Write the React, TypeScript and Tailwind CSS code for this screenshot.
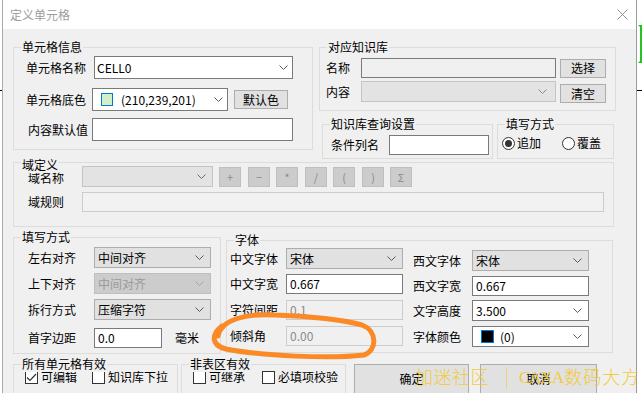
import React from "react";

function Chevron({ color = "#5a5a5a" }: { color?: string }) {
  return (
    <svg width="9" height="5" viewBox="0 0 9 5" className="shrink-0">
      <polyline points="0.5,0.5 4.5,4.5 8.5,0.5" fill="none" stroke={color} strokeWidth="1" />
    </svg>
  );
}

function Frame({ title, cls, titleCls = "top-[-9px]", children }: { title: string; cls: string; titleCls?: string; children?: React.ReactNode }) {
  return (
    <div className={"relative shrink-0 border border-[#dcdcdc] " + cls}>
      <span className={"absolute left-[7px] bg-[#f0f0f0] px-[1px] text-[12px] leading-[16px] whitespace-nowrap text-black " + titleCls}>
        {title}
      </span>
      {children}
    </div>
  );
}

function Radio({ checked }: { checked?: boolean }) {
  return (
    <span className="w-[13px] h-[13px] rounded-full border border-[#333333] bg-white flex items-center justify-center shrink-0">
      {checked && <span className="w-[7px] h-[7px] rounded-full bg-[#333333]" />}
    </span>
  );
}

function Check({ checked }: { checked?: boolean }) {
  return (
    <span className="w-[13px] h-[13px] border border-[#333333] bg-white flex items-center justify-center shrink-0">
      {checked && (
        <svg width="11" height="9" viewBox="0 0 11 9">
          <polyline points="1,4.5 4,7.5 10,1" fill="none" stroke="#333333" strokeWidth="1.2" />
        </svg>
      )}
    </span>
  );
}

function Btn({ cls, children }: { cls: string; children?: React.ReactNode }) {
  return (
    <div className={"shrink-0 flex items-center justify-center bg-[#e1e1e1] border border-[#adadad] text-[12px] leading-[16px] " + cls}>
      {children}
    </div>
  );
}

function OpBtn({ cls, children }: { cls: string; children?: React.ReactNode }) {
  return (
    <div className={"shrink-0 w-[22px] h-[20px] flex items-center justify-center bg-[#cccccc] border border-[#bfbfbf] text-[11px] leading-[14px] text-[#8a8a8a] " + cls}>
      {children}
    </div>
  );
}

export default function App() {
  return (
    <div className="relative w-[642px] h-[393px] overflow-hidden bg-white flex font-['Noto_Sans_CJK_SC','Noto_Sans',sans-serif] text-[12px] leading-[16px] text-black">
      {/* desktop left strip */}
      <div className="w-[2px] shrink-0 bg-white" />
      {/* window */}
      <div className="w-[635px] shrink-0 flex flex-col border-l border-r border-l-[#a9a9a9] border-r-[#9a9a9a]">
        {/* title bar */}
        <div className="h-[29px] shrink-0 bg-white flex items-center justify-between pl-[7px] pr-[8px]">
          <span className="text-[12px] text-[#9d9d9d]">定义单元格</span>
          <svg width="11" height="11" viewBox="0 0 11 11">
            <line x1="0.5" y1="0.5" x2="10.5" y2="10.5" stroke="#8f8f8f" strokeWidth="1" />
            <line x1="10.5" y1="0.5" x2="0.5" y2="10.5" stroke="#8f8f8f" strokeWidth="1" />
          </svg>
        </div>
        {/* body */}
        <div className="flex-1 bg-[#f0f0f0] pl-[10px] pt-[18px] flex flex-col overflow-hidden">
          {/* section 1 */}
          <div className="flex items-start shrink-0">
            <Frame title="单元格信息" cls="w-[300px] h-[103px] pl-[12px] pt-[8px] flex flex-col">
              <div className="flex items-center h-[23px]">
                <span className="w-[68px] shrink-0">单元格名称</span>
                <div className="w-[199px] h-[23px] bg-white border border-[#7a7a7a] flex items-center justify-between pl-[2px] pr-[4px]">
                  <span>CELL0</span>
                  <Chevron />
                </div>
              </div>
              <div className="flex items-center h-[23px] mt-[9px]">
                <span className="w-[66px] shrink-0">单元格底色</span>
                <div className="w-[136px] h-[23px] bg-white border border-[#7a7a7a] flex items-center pl-[8px] pr-[4px]">
                  <span className="w-[12px] h-[13px] border border-[#0078d7] bg-[#d2efc9] shrink-0" />
                  <span className="ml-[8px] flex-1">(210,239,201)</span>
                  <Chevron />
                </div>
                <Btn cls="w-[54px] h-[19px] ml-[6px]">默认色</Btn>
              </div>
              <div className="flex items-center h-[23px] mt-[7px]">
                <span className="w-[64px] ml-[2px] shrink-0">内容默认值</span>
                <div className="w-[201px] h-[23px] bg-white border border-[#7a7a7a]" />
              </div>
            </Frame>

            <div className="ml-[6px] w-[297px] flex flex-col shrink-0">
              <Frame title="对应知识库" cls="w-[297px] h-[64px] pl-[6px] pt-[10px] flex flex-col">
                <div className="flex items-center h-[20px]">
                  <span className="w-[35px] shrink-0">名称</span>
                  <div className="w-[195px] h-[20px] bg-[#f0f0f0] border border-[#7a7a7a]" />
                  <Btn cls="w-[46px] h-[19px] ml-[4px]">选择</Btn>
                </div>
                <div className="flex items-start mt-[3px]">
                  <span className="w-[35px] shrink-0 h-[21px] flex items-center">内容</span>
                  <div className="w-[195px] h-[21px] bg-[#e3e3e3] border border-[#c4c4c4] flex items-center justify-end pr-[8px]">
                    <Chevron color="#8a8a8a" />
                  </div>
                  <Btn cls="w-[46px] h-[19px] ml-[4px] mt-[3px]">清空</Btn>
                </div>
              </Frame>
              <div className="flex mt-[13px]">
                <Frame title="知识库查询设置" cls="ml-[3px] w-[171px] h-[35px] pl-[8px] pt-[10px]">
                  <div className="flex items-center h-[20px]">
                    <span className="w-[58px] shrink-0">条件列名</span>
                    <div className="w-[100px] h-[20px] bg-white border border-[#7a7a7a]" />
                  </div>
                </Frame>
                <Frame title="填写方式" cls="ml-[4px] w-[117px] h-[35px] pl-[4px] pt-[8px]">
                  <div className="flex items-center h-[20px]">
                    <div className="w-[60px] flex items-center shrink-0">
                      <Radio checked />
                      <span className="ml-[2px]">追加</span>
                    </div>
                    <div className="flex items-center">
                      <Radio />
                      <span className="ml-[2px]">覆盖</span>
                    </div>
                  </div>
                </Frame>
              </div>
            </div>
          </div>

          {/* section 2: 域定义 */}
          <Frame title="域定义" titleCls="top-[-6px]" cls="mt-[3px] w-[601px] h-[65px] pl-[14px] pt-[3px] flex flex-col">
            <div className="flex items-center h-[21px]">
              <span className="w-[54px] shrink-0 pt-[2px]">域名称</span>
              <div className="w-[131px] h-[21px] bg-[#e3e3e3] border border-[#c4c4c4] flex items-center justify-end pr-[6px]">
                <Chevron color="#6a6a6a" />
              </div>
              <OpBtn cls="ml-[6px]">+</OpBtn>
              <OpBtn cls="ml-[7px]">−</OpBtn>
              <OpBtn cls="ml-[6px] items-start pt-[2px]">*</OpBtn>
              <OpBtn cls="ml-[7px]">/</OpBtn>
              <OpBtn cls="ml-[6px]">(</OpBtn>
              <OpBtn cls="ml-[7px]">)</OpBtn>
              <OpBtn cls="ml-[6px]">Σ</OpBtn>
            </div>
            <div className="flex items-center h-[20px] mt-[5px]">
              <span className="w-[54px] shrink-0">域规则</span>
              <div className="w-[522px] h-[20px] bg-[#f2f2f2] border border-[#cccccc]" />
            </div>
          </Frame>

          {/* section 3 */}
          <div className="flex items-start mt-[10px] shrink-0">
            <Frame title="填写方式" cls="w-[208px] h-[117px] pl-[14px] pt-[9px] flex flex-col">
              <div className="flex items-center h-[21px]">
                <span className="w-[66px] shrink-0">左右对齐</span>
                <div className="w-[117px] h-[21px] bg-[#e1e1e1] border border-[#adadad] flex items-center justify-between pl-[3px] pr-[6px]">
                  <span>中间对齐</span>
                  <Chevron />
                </div>
              </div>
              <div className="flex items-center h-[21px] mt-[5px]">
                <span className="w-[66px] shrink-0">上下对齐</span>
                <div className="w-[117px] h-[21px] bg-[#cccccc] border border-[#bfbfbf] flex items-center justify-between pl-[3px] pr-[6px]">
                  <span className="text-[#9a9a9a]">中间对齐</span>
                  <Chevron color="#a5a5a5" />
                </div>
              </div>
              <div className="flex items-center h-[21px] mt-[5px]">
                <span className="w-[66px] shrink-0">拆行方式</span>
                <div className="w-[117px] h-[21px] bg-[#e1e1e1] border border-[#adadad] flex items-center justify-between pl-[3px] pr-[6px]">
                  <span>压缩字符</span>
                  <Chevron />
                </div>
              </div>
              <div className="flex items-center h-[20px] mt-[8px]">
                <span className="w-[66px] shrink-0">首字边距</span>
                <div className="w-[68px] h-[20px] bg-white border border-[#7a7a7a] flex items-center pl-[3px]">0.0</div>
                <span className="ml-[13px]">毫米</span>
              </div>
            </Frame>

            <Frame title="字体" cls="ml-[5px] mt-[3px] w-[387px] h-[113px] pl-[3px] flex">
              <div className="flex flex-col pt-[7px] shrink-0">
                <div className="flex items-center h-[21px]">
                  <span className="w-[56px] shrink-0">中文字体</span>
                  <div className="w-[117px] h-[21px] bg-[#e1e1e1] border border-[#adadad] flex items-center justify-between pl-[3px] pr-[6px]">
                    <span>宋体</span>
                    <Chevron />
                  </div>
                </div>
                <div className="flex items-center h-[20px] mt-[5px]">
                  <span className="w-[56px] shrink-0">中文字宽</span>
                  <div className="w-[117px] h-[20px] bg-white border border-[#7a7a7a] flex items-center pl-[3px]">0.667</div>
                </div>
                <div className="flex items-center h-[20px] mt-[6px]">
                  <span className="w-[56px] shrink-0">字符间距</span>
                  <div className="w-[117px] h-[20px] bg-[#f0f0f0] border border-[#cccccc] flex items-center pl-[3px] text-[#8a8a8a]">0.1</div>
                </div>
                <div className="flex items-center h-[20px] mt-[6px]">
                  <span className="w-[56px] shrink-0">倾斜角</span>
                  <div className="w-[117px] h-[20px] bg-[#f0f0f0] border border-[#cccccc] flex items-center pl-[3px] text-[#8a8a8a]">0.00</div>
                </div>
              </div>
              <div className="flex flex-col pt-[9px] ml-[10px] shrink-0">
                <div className="flex items-center h-[21px]">
                  <span className="w-[59px] shrink-0">西文字体</span>
                  <div className="w-[117px] h-[21px] bg-[#e1e1e1] border border-[#adadad] flex items-center justify-between pl-[3px] pr-[6px]">
                    <span>宋体</span>
                    <Chevron />
                  </div>
                </div>
                <div className="flex items-center h-[20px] mt-[5px]">
                  <span className="w-[59px] shrink-0">西文字宽</span>
                  <div className="w-[117px] h-[20px] bg-white border border-[#7a7a7a] flex items-center pl-[3px]">0.667</div>
                </div>
                <div className="flex items-center h-[21px] mt-[4px]">
                  <span className="w-[59px] shrink-0">文字高度</span>
                  <div className="w-[117px] h-[21px] bg-white border border-[#7a7a7a] flex items-center justify-between pl-[3px] pr-[6px]">
                    <span>3.500</span>
                    <Chevron />
                  </div>
                </div>
                <div className="flex items-center h-[21px] mt-[5px]">
                  <span className="w-[59px] shrink-0">字体颜色</span>
                  <div className="w-[117px] h-[21px] bg-white border border-[#7a7a7a] flex items-center pl-[8px] pr-[6px]">
                    <span className="w-[13px] h-[13px] border border-[#0078d7] bg-black shrink-0" />
                    <span className="ml-[6px] flex-1">(0)</span>
                    <Chevron />
                  </div>
                </div>
              </div>
            </Frame>
          </div>

          {/* section 4 */}
          <div className="flex items-start mt-[10px] shrink-0">
            <Frame title="所有单元格有效" cls="w-[165px] h-[40px] pl-[11px] pt-[4px]">
              <div className="flex items-center h-[16px]">
                <div className="w-[67px] flex items-center shrink-0">
                  <Check checked />
                  <span className="ml-[3px]">可编辑</span>
                </div>
                <div className="flex items-center">
                  <Check />
                  <span className="ml-[3px]">知识库下拉</span>
                </div>
              </div>
            </Frame>
            <Frame title="非表区有效" cls="ml-[3px] w-[165px] h-[40px] pl-[11px] pt-[4px]">
              <div className="flex items-center h-[16px]">
                <div className="w-[69px] flex items-center shrink-0">
                  <Check />
                  <span className="ml-[3px]">可继承</span>
                </div>
                <div className="flex items-center">
                  <Check />
                  <span className="ml-[3px]">必填项校验</span>
                </div>
              </div>
            </Frame>
            <Btn cls="ml-[8px] w-[115px] h-[30px]">确定</Btn>
            <Btn cls="ml-[11px] w-[117px] h-[30px]">取消</Btn>
          </div>
        </div>
      </div>
      {/* desktop right strip */}
      <div className="w-[5px] shrink-0 bg-white" />

      {/* desktop marks */}
      <div className="absolute left-[638px] top-[25px] w-[4px] h-[38px] border-t-2 border-b-2 border-l-2 border-[#22c322] border-l-transparent border-r-2" />
      <div className="absolute left-[637px] top-[90px] w-[5px] h-[1px] bg-black" />
      <div className="absolute left-0 top-[90px] w-[2px] h-[1px] bg-black" />

      {/* orange hand-drawn ellipse */}
      <svg className="absolute left-0 top-0 pointer-events-none" width="642" height="393" viewBox="0 0 642 393">
        <path
          d="M 218 336 C 221 320, 245 313, 275 315 C 310 316, 345 320, 362 325 C 378 331, 377 351, 364 355 C 330 359, 262 356, 226 349 C 210 345, 212 334, 222 326"
          fill="none"
          stroke="#fb8a26"
          strokeWidth="5"
          strokeLinecap="round"
          strokeLinejoin="round"
        />
      </svg>

      {/* watermark */}
      <div className="absolute left-[415px] top-[365px] h-[26px] flex items-center pointer-events-none text-[#f4c82a] opacity-90 font-['Liberation_Serif','Noto_Sans_CJK_SC',serif]">
        <span className="text-[18px] leading-[24px] font-light tracking-[0.5px]">加迷社区</span>
        <span className="ml-[17px] w-[1px] h-[22px] bg-[#f4c82a] opacity-60" />
        <span className="ml-[12px] text-[17px] leading-[24px] tracking-[-1px]">CAXA</span>
        <span className="text-[18px] leading-[24px] font-light ml-[1px] tracking-[1px]">数码大方</span>
      </div>
    </div>
  );
}
